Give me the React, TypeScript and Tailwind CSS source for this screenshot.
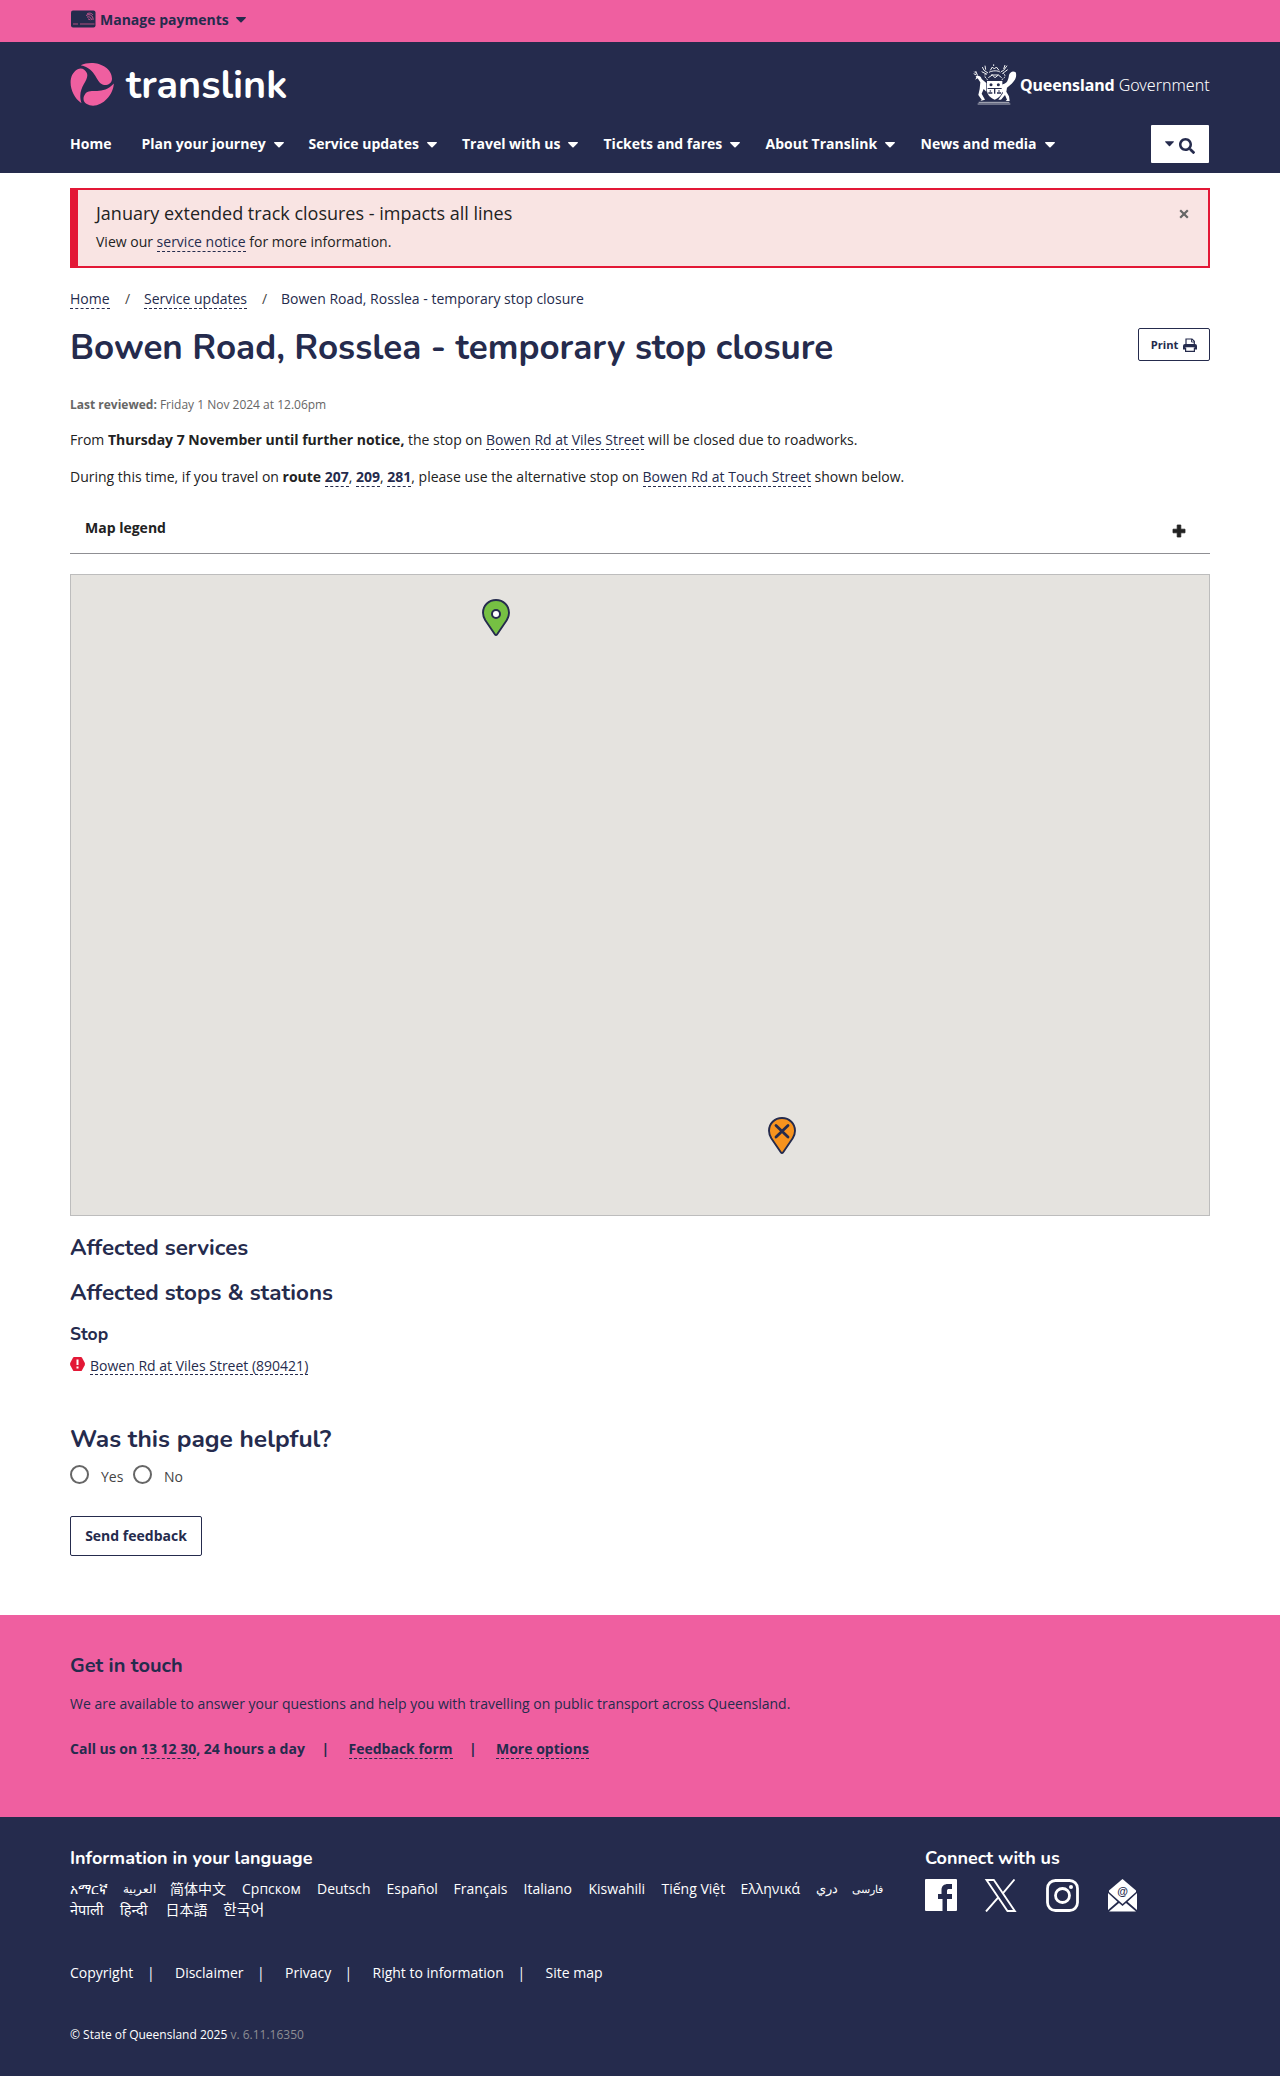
import React from "react";
import { FaSearch } from "react-icons/fa";

const LINK = "border-b border-dashed border-[#252b4d] text-[#252b4d]";

function Caret({ className = "" }: { className?: string }) {
  return (
    <svg className={className} width="10" height="6" viewBox="0 0 10 6" fill="currentColor" aria-hidden="true">
      <path d="M0.6 0h8.8c.5 0 .7.5.4.9L5.6 5.2a.8.8 0 0 1-1.2 0L.2.9C-.1.5.1 0 .6 0Z" />
    </svg>
  );
}

function PaymentCard() {
  return (
    <svg width="26" height="18" viewBox="0 0 26 18" aria-hidden="true">
      <rect x="1" y="0.5" width="24.5" height="17" rx="2" fill="#252b4d" />
      <path d="M3 14h5M10 14h14.5" stroke="#c25287" strokeWidth="0.9" />
      <g fill="none" stroke="#ef5fa0" strokeWidth="0.8">
        <path d="M16 5.5a4.5 4.5 0 0 1 7 2.5v2" />
        <path d="M17 7.2a3 3 0 0 1 4.3 1.8v1" />
        <path d="M18 9a1.8 1.8 0 0 1 2 1.2" />
        <path d="M17 4c2.500-1.800 5-.5 6 1" />
      </g>
    </svg>
  );
}

function PrintIcon() {
  return (
    <svg width="14" height="14" viewBox="0 0 14 14" aria-hidden="true">
      <path d="M3 7V1h6l2.300 2.300V7" fill="none" stroke="#252b4d" strokeWidth="1.200" />
      <path d="M8.500 1v3h3" fill="none" stroke="#252b4d" strokeWidth="0.900" />
      <path d="M2 6h10a2 2 0 0 1 2 2v3.500h-2V9.500H2v2H0V8a2 2 0 0 1 2-2Z" fill="#252b4d" />
      <path d="M2.600 9.500v3.900h8.800V9.500" fill="#fff" stroke="#252b4d" strokeWidth="1.200" />
    </svg>
  );
}

function SwirlLogo() {
  const blade = "M93 196C130 177 188 197 187 237C186 250 175 256 163 255C138 251 142 206 93 196Z";
  return (
    <svg width="44" height="44" viewBox="61 186 132 132" fill="#ef5fa0" aria-hidden="true">
      <path d={blade} />
      <path d={blade} transform="rotate(120 127 252)" />
      <path d={blade} transform="rotate(240 127 252)" />
    </svg>
  );
}

function CoatOfArms() {
  return (
    <svg width="44" height="42" viewBox="0 0 132 126" fill="#fff" aria-hidden="true">
      <g fill="none" stroke="#fff" strokeWidth="2.800">
        <path d="M17 118h92M14 123h98" strokeWidth="2" />
        <path d="M52 22l6-10 6 6 6-6 8 10M48 28c10-6 28-6 34 0M54 36h22M46 44l12-8 8 8 10-8 10 8" />
        <path d="M28 12l5 10 12 8M36 8l2 12M26 26l16 8M102 8l-10 14-8 4M96 6l-4 12M104 20l-16 12" />
        <path d="M44 50c-8-4-12-14-4-20M86 50c10-4 14-14 4-20M62 4v8" strokeDasharray="5 3" />
        <path d="M4 26l6 6M2 32l8 4M8 24l6 14" />
      </g>
      <path d="M8 40c8-4 16 0 18 8l14 12v26l-8-8-6 14 10 18-14 4 4-4-10-14 4-18 2-20-8-12-8 4 4-6Z" />
      <path d="M128 28c4 10 0 24-12 34l-14 12-2 12 8 14 2 14h-12l4-4-6-14-12 14h-8l14-20-6-8 4-18c14-2 18-12 20-28 4-10 12-14 20-8Z" />
      <path d="M42 54h46v28c0 14-12 24-23 28-11-4-23-14-23-28Z" />
      <g fill="#252b4d">
        <circle cx="54" cy="65" r="4.500" />
        <circle cx="76" cy="65" r="4.500" />
        <path d="M44 75h42v3H44ZM63 78h4v14h-4ZM46 88h12v4H46ZM72 88h12v4H72Z" />
        <circle cx="52" cy="84" r="2.500" />
        <circle cx="78" cy="84" r="2.500" />
      </g>
    </svg>
  );
}

function Pin({ color, closed }: { color: string; closed?: boolean }) {
  return (
    <svg width="28" height="37" viewBox="0 0 28 37" aria-hidden="true">
      <path d="M14 1C6.500 1 1 6.800 1 13.800c0 3 .9 5.200 2.300 7.500L13 35.500c.5.700 1.500.700 2 0l9.700-14.200c1.500-2.300 2.300-4.500 2.300-7.500C27 6.800 21.500 1 14 1Z" fill={color} stroke="#252b4d" strokeWidth="1.900" />
      {closed ? (
        <path d="M8 8.500l12 11.500M20 8.500L8 20" stroke="#252b4d" strokeWidth="2.800" strokeLinecap="round" />
      ) : (
        <circle cx="14" cy="15" r="4" fill="#fff" stroke="#252b4d" strokeWidth="2" />
      )}
    </svg>
  );
}

const NAV = [
  { label: "Home", w: "w-[71.500px]" },
  { label: "Plan your journey", w: "w-[167px]" },
  { label: "Service updates", w: "w-[153.500px]" },
  { label: "Travel with us", w: "w-[141.500px]" },
  { label: "Tickets and fares", w: "w-[162px]" },
  { label: "About Translink", w: "w-[155px]" },
  { label: "News and media", w: "w-[160px]" },
];

const LANGS_1 = [
  { t: "አማርኛ", w: "w-[53px]" },
  { t: "العربية", w: "w-[47px] text-[11.500px]" },
  { t: "简体中文", w: "w-[72px]" },
  { t: "Српском", w: "w-[75px]" },
  { t: "Deutsch", w: "w-[69.500px]" },
  { t: "Español", w: "w-[67px]" },
  { t: "Français", w: "w-[70px]" },
  { t: "Italiano", w: "w-[65px]" },
  { t: "Kiswahili", w: "w-[73px]" },
  { t: "Tiếng Việt", w: "w-[79px]" },
  { t: "Ελληνικά", w: "w-[75px]" },
  { t: "دري", w: "w-[36.500px] text-[12.500px]" },
  { t: "فارسی", w: "w-[40px] text-[11px]" },
];

const LANGS_2 = [
  { t: "नेपाली", w: "w-[50px] text-[14.500px]" },
  { t: "हिन्दी", w: "w-[45.500px] text-[14.500px]" },
  { t: "日本語", w: "w-[57.500px]" },
  { t: "한국어", w: "w-[50px] text-[15px]" },
];

const LEGAL = [
  { t: "Copyright", w: "w-[77px]" },
  { t: "Disclaimer", w: "w-[82px]" },
  { t: "Privacy", w: "w-[59.500px]" },
  { t: "Right to information", w: "w-[145px]" },
  { t: "Site map", w: "" },
];

const HEAD = "font-[Nunito,Lato,sans-serif] font-bold text-[#252b4d] whitespace-nowrap";

export default function App() {
  return (
    <div className="h-[2076px] w-[1280px] bg-white font-['Open_Sans','Noto_Sans','Noto_Sans_CJK_SC',sans-serif] text-[14px] leading-[21px] text-[#222]">
      <div className="h-[42px] bg-[#ef5fa0]">
        <div className="mx-auto flex h-[38px] w-[1140px] items-center text-[#252b4d]">
          <div className="-mt-px"><PaymentCard /></div>
          <span className="ml-[4px] pt-px font-bold">Manage payments</span>
          <Caret className="ml-[7px] mt-px" />
        </div>
      </div>

      <header className="h-[131px] bg-[#252b4d] text-white">
        <div className="mx-auto w-[1140px] pt-[20px]">
          <div className="flex h-[44px] items-start justify-between">
            <div className="flex items-start">
              <SwirlLogo />
              <span className="ml-[12px] font-[Nunito,Lato,sans-serif] text-[39.500px] leading-[47px] font-bold">translink</span>
            </div>
            <div className="flex items-start pt-px">
              <CoatOfArms />
              <span className="ml-[3px] w-[190px] text-[16px] leading-[44px] whitespace-nowrap">
                <span className="font-['Noto_Sans'] font-bold tracking-[-0.1px]">Queensland</span>{" "}
                <span className="font-['Noto_Sans'] font-light">Government</span>
              </span>
            </div>
          </div>
          <div className="mt-[19px] flex h-[38px] justify-between">
            <nav className="-mt-[2px] flex items-center font-bold">
              {NAV.map((n, i) => (
                <a key={n.label} className={`${n.w} flex shrink-0 items-center whitespace-nowrap`}>
                  {n.label}
                  {i > 0 && <Caret className="mt-[3px] ml-[8px]" />}
                </a>
              ))}
            </nav>
            <button className="mr-px flex w-[58px] items-center justify-center gap-[5px] rounded-[1px] bg-white pt-[2px] text-[#252b4d]">
              <Caret className="-mt-[2px] w-[9px]" />
              <FaSearch size={16} className="mt-px" />
            </button>
          </div>
        </div>
      </header>

      <main className="mx-auto h-[1442px] w-[1140px] pt-[15px]">
        <section className="relative h-[80px] border-2 border-l-8 border-[#e31836] bg-[#f9e4e3] pt-[10px] pl-[18px]">
          <h2 className="text-[18px] leading-[27px]">January extended track closures - impacts all lines</h2>
          <p className="mt-[4px]">View our <a className={LINK}>service notice</a> for more information.</p>
          <svg className="absolute top-[19px] right-[19px]" width="10" height="10" viewBox="0 0 10 10" aria-hidden="true">
            <path d="M1.200 1.200l7.600 7.600M8.800 1.200L1.200 8.800" stroke="#666" strokeWidth="2.200" />
          </svg>
        </section>

        <nav className="mt-[20px] flex h-[21px] whitespace-nowrap">
          <span className="w-[55px]"><a className={LINK}>Home</a></span>
          <span className="w-[19px] text-[#444]">/</span>
          <span className="w-[118px]"><a className={LINK}>Service updates</a></span>
          <span className="w-[19px] text-[#444]">/</span>
          <span className="text-[#252b4d]">Bowen Road, Rosslea - temporary stop closure</span>
        </nav>

        <div className="mt-[19px] flex h-[65px] items-start justify-between">
          <h1 className={`${HEAD} text-[35px] leading-[40px]`}>Bowen Road, Rosslea - temporary stop closure</h1>
          <button className="flex h-[33px] w-[72px] items-center justify-center gap-[5px] rounded-[2px] border border-[#252b4d] text-[11.200px] font-bold text-[#252b4d]">
            Print <PrintIcon />
          </button>
        </div>

        <p className="mt-[2px] h-[19px] text-[12px] leading-[19px] text-[#666]"><b>Last reviewed:</b> Friday 1 Nov 2024 at 12.06pm</p>
        <p className="mt-[15px]">
          From <b>Thursday 7 November until further notice,</b> the stop on <a className={LINK}>Bowen Rd at Viles Street</a> will be closed due to roadworks.
        </p>
        <p className="mt-[16px]">
          During this time, if you travel on <b>route <a className={LINK}>207</a></b>, <b><a className={LINK}>209</a></b>, <b><a className={LINK}>281</a></b>, please use the alternative stop on <a className={LINK}>Bowen Rd at Touch Street</a> shown below.
        </p>

        <div className="mt-[20px] flex h-[47px] items-start justify-between border-b border-[#8f8f93] px-[15px] pt-[10px]">
          <b>Map legend</b>
          <svg className="mt-[7px] mr-[9px]" width="14" height="14" viewBox="0 0 14 14" aria-hidden="true">
            <path d="M5.200 1h3.600v4.200H13v3.600H8.800V13H5.200V8.800H1V5.200h4.200Z" fill="#222" stroke="#222" strokeWidth="0.800" strokeLinejoin="round" />
          </svg>
        </div>

        <div className="relative mt-[20px] h-[642px] border border-[#bdbdbd] bg-[#e5e3df]">
          <div className="absolute top-[24px] left-[411px]"><Pin color="#76c043" /></div>
          <div className="absolute top-[542px] left-[697px]"><Pin color="#f7931e" closed /></div>
        </div>

        <h2 className={`${HEAD} mt-[18px] text-[22.400px] leading-[28px]`}>Affected services</h2>
        <h2 className={`${HEAD} mt-[17px] text-[22.400px] leading-[28px]`}>Affected stops &amp; stations</h2>
        <h3 className={`${HEAD} mt-[15px] text-[17.500px] leading-[24px]`}>Stop</h3>
        <div className="mt-[9px] flex h-[22px] items-start">
          <svg width="15" height="14" viewBox="0 0 15 14" className="mt-[2px] mr-[5px] shrink-0" aria-hidden="true">
            <path d="M4 0h7q.6 0 .9.500l2.800 5.300q.5 1.200 0 2.400l-2.800 5.300q-.3.500-.9.500H4q-.6 0-.9-.5L.3 8.200q-.5-1.200 0-2.400L3.100.5Q3.400 0 4 0Z" fill="#e31836" />
            <path d="M6.500 2.500h2v5.500h-2ZM6.500 9.500h2v2h-2Z" fill="#fff" />
          </svg>
          <a className={`${LINK} h-[20px]`}>Bowen Rd at Viles Street (890421)</a>
        </div>

        <h2 className={`${HEAD} mt-[46px] text-[24.500px] leading-[32px]`}>Was this page helpful?</h2>
        <div className="mt-[10px] flex h-[22px] items-start text-[#444]">
          <span className="size-[19px] rounded-full border-2 border-[#666]" />
          <span className="ml-[12px] w-[32px] pt-px">Yes</span>
          <span className="size-[19px] rounded-full border-2 border-[#666]" />
          <span className="ml-[12px] pt-px">No</span>
        </div>
        <button className="mt-[29px] flex h-[40px] w-[132px] items-center justify-center rounded-[2px] border border-[#252b4d] pb-[2px] font-bold text-[#252b4d]">Send feedback</button>
      </main>

      <section className="h-[202px] bg-[#ef5fa0] text-[#252b4d]">
        <div className="mx-auto w-[1140px] pt-[37px]">
          <h2 className={`${HEAD} text-[20px] leading-[28px]`}>Get in touch</h2>
          <p className="mt-[13px]">We are available to answer your questions and help you with travelling on public transport across Queensland.</p>
          <p className="mt-[24px] flex font-bold whitespace-pre">
            <span className="w-[251.500px]">Call us on <a className={LINK}>13 12 30</a>, 24 hours a day</span>
            <span className="w-[27px]">|</span>
            <span className="w-[120.500px]"><a className={LINK}>Feedback form</a></span>
            <span className="w-[27px]">|</span>
            <a className={`${LINK} h-[21px]`}>More options</a>
          </p>
        </div>
      </section>

      <footer className="h-[259px] bg-[#252b4d] text-white">
        <div className="mx-auto w-[1140px] pt-[28px]">
          <div className="flex">
            <div className="w-[855px]">
              <h3 className="font-[Nunito,Lato,sans-serif] text-[18px] leading-[27px] font-bold whitespace-nowrap">Information in your language</h3>
              <div className="mt-[6px] flex h-[21px] whitespace-nowrap">
                {LANGS_1.map((l) => <a key={l.t} className={`${l.w} shrink-0`}>{l.t}</a>)}
              </div>
              <div className="flex h-[21px] whitespace-nowrap">
                {LANGS_2.map((l) => <a key={l.t} className={`${l.w} shrink-0`}>{l.t}</a>)}
              </div>
            </div>
            <div>
              <h3 className="font-[Nunito,Lato,sans-serif] text-[18px] leading-[27px] font-bold whitespace-nowrap">Connect with us</h3>
              <div className="mt-[7px] flex">
                <svg width="32" height="33" viewBox="0 0 32 33" aria-hidden="true">
                  <path d="M1 0h30a1 1 0 0 1 1 1v30a1 1 0 0 1-1 1h-9V20h5v-5h-5v-3c0-1.500.7-2 2-2h3V5h-4c-4 0-6.500 2-6.500 6v4H13v5h4.500v12H1a1 1 0 0 1-1-1V1a1 1 0 0 1 1-1Z" fill="#fff" />
                </svg>
                <svg className="ml-[27px]" width="33" height="33" viewBox="0 0 33 33" fill="none" stroke="#fff" strokeWidth="1.900" aria-hidden="true">
                  <path d="M2.500 1h7.300l21 31h-7.300ZM30.500 .5L19 14.200M14.500 18.200L2 32.500" />
                </svg>
                <svg className="ml-[29px]" width="33" height="33" viewBox="0 0 33 33" fill="none" stroke="#fff" strokeWidth="2.800" aria-hidden="true">
                  <rect x="1.500" y="1.500" width="30" height="30" rx="8" />
                  <circle cx="16.500" cy="16.500" r="7" />
                  <circle cx="25" cy="8" r="2" fill="#fff" stroke="none" />
                </svg>
                <svg className="ml-[29px]" width="29" height="33" viewBox="0 0 29 33" aria-hidden="true">
                  <path d="M14.500 0L28 11.500v1.500L14.500 25 1 13v-1.500Z" fill="#fff" />
                  <path d="M0 14l9.500 8.800L0 31ZM29 14v17l-9.500-8.200ZM1 32.500L11 24l3.500 3 3.500-3 10 8.500Z" fill="#fff" />
                  <text x="14.500" y="16" textAnchor="middle" fontSize="11" fontFamily="Liberation Sans" fontWeight="bold" fill="#252b4d">@</text>
                </svg>
              </div>
            </div>
          </div>
          <div className="mt-[42px] flex h-[21px] whitespace-nowrap">
            {LEGAL.map((l, i) => (
              <React.Fragment key={l.t}>
                <a className={`${l.w} shrink-0`}>{l.t}</a>
                {i < 4 && <span className="w-[28px] shrink-0">|</span>}
              </React.Fragment>
            ))}
          </div>
          <p className="mt-[42px] text-[12px] leading-[19px]">© State of Queensland 2025 <span className="text-[#8d8d93]">v. 6.11.16350</span></p>
        </div>
      </footer>
    </div>
  );
}
